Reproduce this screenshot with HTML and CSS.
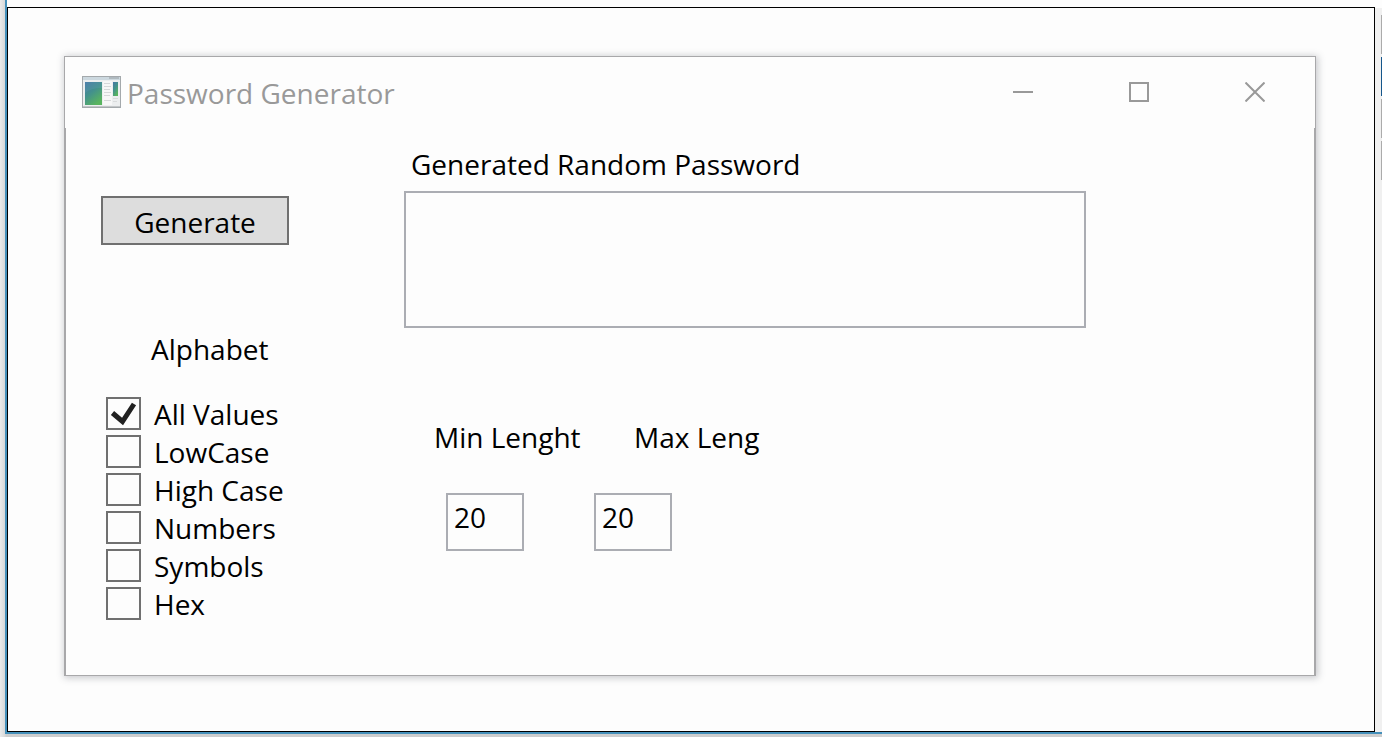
FILE: index.html
```html
<!DOCTYPE html>
<html lang="en">
<head>
<meta charset="utf-8">
<title>Password Generator</title>
<link rel="stylesheet" href="styles.css">
</head>
<body>
<div class="desk">
  <div class="canvas">
    <main class="window">
      <header class="titlebar">
        <svg class="app-icon" viewBox="0 0 39 32" aria-hidden="true">
          <defs>
            <linearGradient id="pane" x1="0" y1="0" x2=".6" y2="1">
              <stop offset="0" stop-color="#4676a6"/>
              <stop offset=".5" stop-color="#43918c"/>
              <stop offset="1" stop-color="#59b45f"/>
            </linearGradient>
          </defs>
          <rect x=".5" y=".5" width="38" height="31" fill="#eceeef" stroke="#a4a9ac"/>
          <path d="M1 2.500h37" stroke="#ccd8df" stroke-width="3"/>
          <path d="M27 2h10" stroke="#939ba0"/>
          <path d="M1 30.500h37" stroke="#c3c6c8"/>
          <rect x="3" y="6" width="17" height="23" fill="url(#pane)"/>
          <path d="M3 17q6-5 17-5v-6H3z" fill="#6fa3bf" opacity=".2"/>
          <rect x="21" y="5" width="9" height="24" fill="#f7f7f7"/>
          <path d="M22 7.500h6M22 10.500h7M22 13.500h6M22 16.500h7M22 19.500h6M22 24.500h7" stroke="#d6d8d9"/>
          <rect x="31" y="6" width="5" height="14" fill="url(#pane)"/>
          <path d="M31 22.500h5M31 25.500h4" stroke="#d9dbdc"/>
        </svg>
        <h1 class="title">Password Generator</h1>
        <button class="control" type="button" aria-label="Minimize"><svg viewBox="0 0 20 20"><path d="M0 10h20"/></svg></button>
        <button class="control" type="button" aria-label="Maximize"><svg viewBox="0 0 20 20"><path d="M1 1h18v18H1z"/></svg></button>
        <button class="control" type="button" aria-label="Close"><svg viewBox="0 0 20 20"><path d="M.5.5l19 19M19.500.5l-19 19"/></svg></button>
      </header>
      <form class="content">
        <div class="options">
          <button class="generate" type="button">Generate</button>
          <fieldset class="alphabet">
            <legend>Alphabet</legend>
            <label class="check"><input type="checkbox" checked><svg class="tick" viewBox="0 0 35 33"><path d="M6.500 16l10 8.500L28 7"/></svg><span>All Values</span></label>
            <label class="check"><input type="checkbox"><span>LowCase</span></label>
            <label class="check"><input type="checkbox"><span>High Case</span></label>
            <label class="check"><input type="checkbox"><span>Numbers</span></label>
            <label class="check"><input type="checkbox"><span>Symbols</span></label>
            <label class="check"><input type="checkbox"><span>Hex</span></label>
          </fieldset>
        </div>
        <div class="result">
          <label class="result-label" for="password">Generated Random Password</label>
          <textarea class="field password" id="password"></textarea>
          <div class="length-labels">
            <label class="length-label" for="min">Min Lenght</label>
            <label class="length-label cut" for="max">Max Leng</label>
          </div>
          <div class="length-fields">
            <input class="field length" id="min" type="text" value="20">
            <input class="field length" id="max" type="text" value="20">
          </div>
        </div>
      </form>
    </main>
  </div>
  <aside class="edge" aria-hidden="true">
    <i class="mark"></i><i class="mark active"></i><i class="mark"></i><i class="mark"></i>
  </aside>
</div>
</body>
</html>
```
FILE: styles.css
```css
* { box-sizing: border-box; }

body {
  margin: 0;
  min-height: 100vh;
  display: flex;
  padding: 0 0 3px 5px;
  background: linear-gradient(90deg, #ebebeb, #d8d8d8 5px, #cdcdcd 6px);
  color: #000;
  font: 28px/38px "Open Sans", "Noto Sans", sans-serif;
}

button, input, textarea { font: inherit; color: inherit; }

.desk {
  flex: 1;
  display: flex;
  border: solid #4590ba;
  border-width: 0 0 2px 2px;
  background: #fdfdfd;
}

.canvas {
  flex: 1;
  display: flex;
  margin-top: 7px;
  padding: 48px 58px 55px 56px;
  border: 1px solid #000;
}

.edge {
  width: 7px;
  margin-top: 8px;
  padding-top: 7px;
  display: flex;
  flex-direction: column;
  align-items: flex-end;
  gap: 3px;
  background: #f0f0f0;
}

.mark { width: 1px; height: 39px; background: #ababab; }
.mark.active { background: #15568b; }

.window {
  flex: 1;
  display: flex;
  flex-direction: column;
  border: 1px solid #a8a8aa;
  background: #fdfdfd;
  box-shadow: 1px 1px 7px 1px rgba(60, 65, 80, .28);
}

.titlebar {
  display: flex;
  align-items: center;
  height: 71px;
  padding: 0 2px 2px 17px;
}

.app-icon { width: 39px; height: 32px; margin-right: 6px; }

.title {
  flex: 1;
  margin: 0;
  padding-top: 2px;
  color: #999;
  font-size: 28px;
  font-weight: 400;
}

.control {
  width: 116px;
  height: 69px;
  padding: 0;
  border: 0;
  background: none;
}

.control svg {
  display: block;
  width: 20px;
  height: 20px;
  margin: 0 auto;
  fill: none;
  stroke: #999;
  stroke-width: 2;
}

.content {
  flex: 1;
  display: flex;
  border: solid #a8a8aa;
  border-width: 0 1px;
  padding: 17px 228px 54px 35px;
}

.options { width: 303px; padding-top: 51px; }

.generate {
  display: block;
  width: 188px;
  height: 49px;
  padding: 2px 0 0;
  border: 2px solid #707070;
  background: #ddd;
  line-height: 38px;
}

.alphabet {
  display: flex;
  flex-direction: column;
  gap: 5px;
  margin: 85px 0 0;
  padding: 0 0 0 5px;
  border: 0;
}

.alphabet legend { padding: 0 0 29px 45px; }

.check {
  position: relative;
  display: flex;
  align-items: center;
  gap: 13px;
  height: 33px;
}

.check input {
  appearance: none;
  width: 35px;
  height: 33px;
  margin: 0;
  border: 2px solid #707070;
  background: #fdfdfd;
}

.tick {
  position: absolute;
  left: 0;
  top: 0;
  width: 35px;
  height: 33px;
  fill: none;
  stroke: #212121;
  stroke-width: 5;
}

.check input:not(:checked) + .tick { display: none; }

.result { flex: 1; }

.result-label { display: block; padding-left: 7px; }

.field {
  border: 2px solid #abadb3;
  border-radius: 0;
  background: #fdfdfd;
  outline: 0;
}

.password {
  display: block;
  width: 100%;
  height: 137px;
  margin-top: 8px;
  padding: 4px 6px;
  resize: none;
}

.length-labels {
  display: flex;
  gap: 48px;
  margin-top: 90px;
  padding-left: 30px;
}

.length-label { width: 152px; white-space: nowrap; }
.length-label.cut { width: 126px; overflow: hidden; }

.length-fields {
  display: flex;
  gap: 70px;
  margin-top: 37px;
  padding-left: 42px;
}

.length {
  width: 78px;
  height: 58px;
  padding: 0 6px 10px;
}
```
